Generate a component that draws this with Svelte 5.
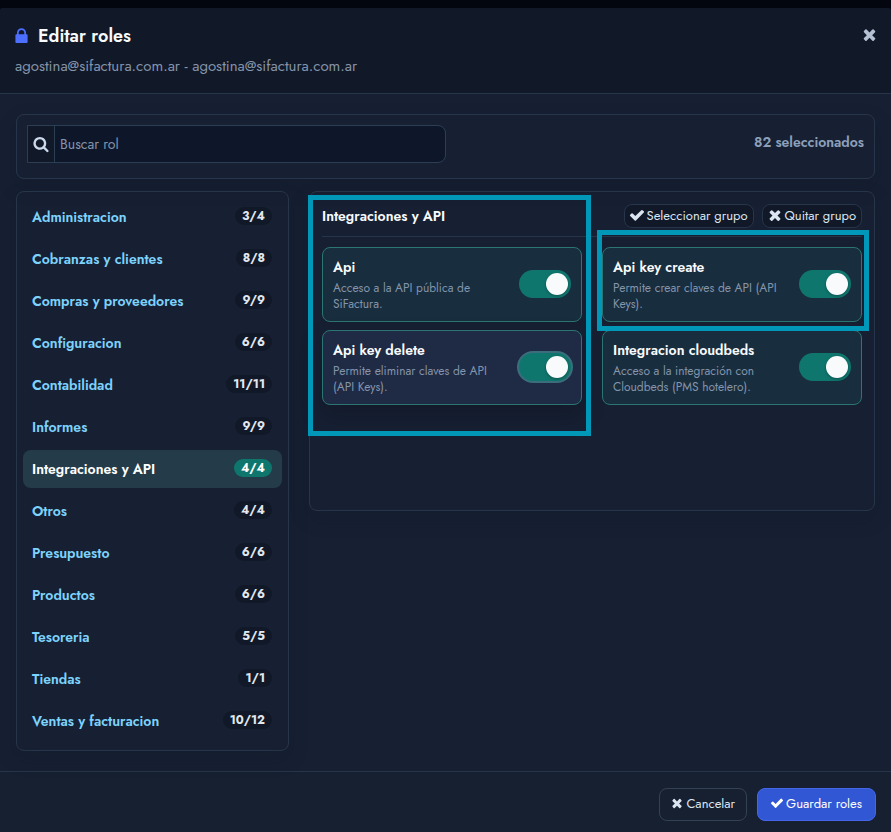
<script lang="ts">
	type Role = {
		name: string;
		description: string;
		enabled: boolean;
		state?: 'active';
		marked?: boolean;
	};

	const groups = [
		{ name: 'Administracion', count: '3/4' },
		{ name: 'Cobranzas y clientes', count: '8/8' },
		{ name: 'Compras y proveedores', count: '9/9' },
		{ name: 'Configuracion', count: '6/6' },
		{ name: 'Contabilidad', count: '11/11' },
		{ name: 'Informes', count: '9/9' },
		{ name: 'Integraciones y API', count: '4/4' },
		{ name: 'Otros', count: '4/4' },
		{ name: 'Presupuesto', count: '6/6' },
		{ name: 'Productos', count: '6/6' },
		{ name: 'Tesoreria', count: '5/5' },
		{ name: 'Tiendas', count: '1/1' },
		{ name: 'Ventas y facturacion', count: '10/12' }
	];

	let selected = $state('Integraciones y API');
	let search = $state('');
	let roles = $state<Role[]>([
		{ name: 'Api', description: 'Acceso a la API pública de SiFactura.', enabled: true },
		{ name: 'Api key create', description: 'Permite crear claves de API (API Keys).', enabled: true, marked: true },
		{ name: 'Api key delete', description: 'Permite eliminar claves de API (API Keys).', enabled: true, state: 'active' },
		{ name: 'Integracion cloudbeds', description: 'Acceso a la integración con Cloudbeds (PMS hotelero).', enabled: true }
	]);

	const icons = {
		lock: 'M608 768h576v-160q0-118-85-203t-203-85-203 85-85 203v160zm912 64v736q0 40-28 68t-68 28h-1056q-40 0-68-28t-28-68v-704q0-40 28-68t68-28h64v-160q0-200 136-328t328-128 328 128 136 328v160h64q40 0 68 28t28 68z',
		times: 'M1490 1322q0 40-28 68l-136 136q-28 28-68 28t-68-28l-294-294-294 294q-28 28-68 28t-68-28l-136-136q-28-28-28-68t28-68l294-294-294-294q-28-28-28-68t28-68l136-136q28-28 68-28t68 28l294 294 294-294q28-28 68-28t68 28l136 136q28 28 28 68t-28 68l-294 294 294 294q28 28 28 68z',
		check: 'M1671 566q0 40-28 68l-724 724-136 136q-28 28-68 28t-68-28l-136-136-362-362q-28-28-28-68t28-68l136-136q28-28 68-28t68 28l294 295 656-657q28-28 68-28t68 28l136 136q28 28 28 68z',
		search: 'M1216 832q0-185-131.5-316.5t-316.5-131.5-316.5 131.5-131.5 316.5 131.5 316.5 316.5 131.5 316.5-131.5 131.5-316.5zm512 832q0 52-38 90t-90 38q-54 0-90-38l-343-342q-179 124-399 124-143 0-273.5-55.5t-225-150-150-225-55.5-273.5 55.5-273.5 150-225 225-150 273.5-55.5 273.5 55.5 225 150 150 225 55.5 273.5q0 220-124 399l343 343q37 37 37 90z'
	};

	function setAll(value: boolean) {
		for (const role of roles) role.enabled = value;
	}
</script>

{#snippet icon(name: keyof typeof icons, size: number)}
	<svg width={size} height={size} viewBox="128 128 1536 1536" fill="currentColor" aria-hidden="true">
		<path d={icons[name]}></path>
	</svg>
{/snippet}

<div class="modal">
	<header class="modal-header">
		<div class="title-row">
			<h1><span class="lock">{@render icon('lock', 15)}</span>Editar roles</h1>
			<button class="close" aria-label="Cerrar">{@render icon('times', 15)}</button>
		</div>
		<p class="user">agostina@sifactura.com.ar - agostina@sifactura.com.ar</p>
	</header>

	<div class="modal-body">
		<div class="toolbar">
			<div class="search">
				<label for="role-search" aria-label="Buscar rol">{@render icon('search', 14)}</label>
				<input id="role-search" type="text" placeholder="Buscar rol" bind:value={search} />
			</div>
			<span class="total">82 seleccionados</span>
		</div>

		<div class="columns">
			<nav class="groups">
				{#each groups as group (group.name)}
					<button class="group" class:selected={selected === group.name} onclick={() => (selected = group.name)}>
						<span>{group.name}</span>
						<span class="badge">{group.count}</span>
					</button>
				{/each}
			</nav>

			<section class="panel">
				<div class="panel-header">
					<h2>Integraciones y API</h2>
					<div class="panel-actions">
						<button class="small-btn" onclick={() => setAll(true)}>{@render icon('check', 14)}Seleccionar grupo</button>
						<button class="small-btn" onclick={() => setAll(false)}>{@render icon('times', 14)}Quitar grupo</button>
					</div>
				</div>
				<div class="roles">
					{#each roles as role (role.name)}
						<label class="role" class:enabled={role.enabled} class:active={role.state === 'active'} class:marked={role.marked}>
							<span class="role-text">
								<span class="role-name">{role.name}</span>
								<span class="role-desc">{role.description}</span>
							</span>
							<input class="switch" type="checkbox" role="switch" bind:checked={role.enabled} />
						</label>
					{/each}
				</div>
			</section>
		</div>
	</div>

	<footer class="modal-footer">
		<button class="btn">{@render icon('times', 12)}Cancelar</button>
		<button class="btn primary">{@render icon('check', 12)}Guardar roles</button>
	</footer>
</div>

<style>
	:global(body) {
		margin: 0;
		background: #03060f;
	}
	.modal {
		margin-top: 8px;
		border-radius: 3px 3px 0 0;
		background: #172033;
		color: #f8fafc;
		font-family: Jost, Lato, sans-serif;
		font-size: 14px;
		line-height: 20px;
	}
	.modal *,
	.modal *::before,
	.modal *::after {
		box-sizing: border-box;
	}
	button,
	input {
		font: inherit;
		color: inherit;
	}
	button {
		cursor: pointer;
	}
	svg {
		display: block;
		flex-shrink: 0;
		overflow: visible;
	}
	.modal-header {
		padding: 16px 15px;
		border-bottom: 1px solid #27354a;
		border-radius: 3px 3px 0 0;
		background: #111827;
	}
	.title-row {
		display: flex;
		align-items: center;
		justify-content: space-between;
	}
	h1,
	h2,
	p {
		margin: 0;
	}
	h1 {
		display: flex;
		align-items: center;
		gap: 9px;
		font-size: 18px;
		line-height: 24px;
		font-weight: 600;
	}
	.lock {
		margin-left: -1px;
		padding-bottom: 2px;
		color: #4c6fff;
	}
	.close {
		padding: 0 0 4px;
		margin-right: -1px;
		border: 0;
		background: none;
		color: #b4c0d4;
	}
	.user {
		margin-top: 8px;
		padding-bottom: 1px;
		color: #8494ab;
		font-size: 15px;
	}
	.modal-body {
		padding: 20px 16px;
	}
	.toolbar {
		display: flex;
		justify-content: space-between;
		align-items: flex-start;
		margin-bottom: 12px;
		padding: 10px 10px 15px;
		border: 1px solid #27354a;
		border-radius: 8px;
		box-shadow: 0 8px 20px rgba(10, 16, 28, 0.18);
	}
	.search {
		display: flex;
		width: 50%;
		height: 38px;
		border: 1px solid #2c3e53;
		border-radius: 0 8px 8px 0;
		background: #0e172a;
	}
	.search label {
		display: flex;
		align-items: center;
		padding: 0 6px;
		border-right: 1px solid #2c3e53;
		background: #111827;
		color: #cbd9ea;
	}
	.search input {
		flex: 1;
		min-width: 0;
		padding: 0 5px;
		border: 0;
		background: none;
		outline: none;
	}
	.search input::placeholder {
		color: #8494ab;
	}
	.total {
		margin-top: 7px;
		color: #8da0bb;
		font-weight: 600;
	}
	.columns {
		display: grid;
		grid-template-columns: 273px 1fr;
		align-items: start;
		gap: 20px;
	}
	.groups {
		display: flex;
		flex-direction: column;
		gap: 4px;
		padding: 6px 6px 10px;
		border: 1px solid #27354a;
		border-radius: 8px;
		box-shadow: 0 8px 20px rgba(10, 16, 28, 0.18);
	}
	.group {
		display: flex;
		align-items: center;
		justify-content: space-between;
		height: 38px;
		padding: 0 10px 0 9px;
		border: 0;
		border-radius: 8px;
		background: none;
		color: #7dd3fc;
		font-weight: 600;
		text-align: left;
	}
	.group.selected {
		background: #243c4a;
		color: #fff;
	}
	.badge {
		margin-bottom: 2px;
		padding: 0 7px;
		border-radius: 9px;
		background: #111827;
		color: #e2e8f0;
		font-size: 12px;
		font-weight: 700;
		line-height: 18px;
	}
	.selected .badge {
		background: #0f766e;
		color: #fff;
	}
	.panel {
		position: relative;
		min-height: 320px;
		padding: 12px;
		border: 1px solid #27354a;
		border-radius: 8px;
		box-shadow: 0 8px 20px rgba(10, 16, 28, 0.18);
	}
	/* highlight around the heading and first column */
	.panel::after {
		content: '';
		position: absolute;
		top: 3px;
		left: -2px;
		width: calc(50% + 1px);
		height: 241px;
		border: 5px solid #0097b8;
		pointer-events: none;
	}
	.panel-header {
		display: flex;
		justify-content: space-between;
		margin-bottom: 10px;
		padding-bottom: 8px;
		border-bottom: 1px solid #27354a;
	}
	h2 {
		font-size: 14px;
		line-height: 24px;
		font-weight: 600;
	}
	.panel-actions {
		display: flex;
		gap: 8px;
	}
	.small-btn {
		display: flex;
		align-items: center;
		gap: 3px;
		height: 24px;
		padding: 0 5px;
		border: 1px solid #27354a;
		border-radius: 8px;
		background: #111827;
		color: #dbe5f1;
		font-size: 13px;
	}
	.small-btn svg,
	.btn svg {
		margin-bottom: 2px;
	}
	.roles {
		display: grid;
		grid-template-columns: 1fr 1fr;
		gap: 8px 20px;
	}
	.role {
		position: relative;
		display: flex;
		align-items: center;
		justify-content: space-between;
		gap: 20px;
		padding: 9px 10px;
		border: 1px solid #334155;
		border-radius: 8px;
	}
	.role.enabled {
		border-color: #2b7672;
		background: #182d3d;
	}
	.role.active {
		background: #1f2a44;
		box-shadow: 0 10px 22px rgba(5, 10, 20, 0.3);
	}
	.role.marked::after {
		content: '';
		position: absolute;
		inset: -18px -8px -10px -6px;
		z-index: 1;
		border: 5px solid #0097b8;
		pointer-events: none;
	}
	.role-name {
		display: block;
		margin-bottom: 3px;
		font-weight: 600;
	}
	.role-desc {
		display: block;
		color: #8494ab;
		font-size: 12px;
		line-height: 16px;
	}
	.switch {
		appearance: none;
		flex-shrink: 0;
		width: 52px;
		height: 28px;
		margin: 0 0 1px;
		padding: 3px;
		border-radius: 14px;
		background: #475569;
	}
	.switch::before {
		content: '';
		display: block;
		width: 22px;
		height: 22px;
		border-radius: 50%;
		background: #f8fafc;
		box-shadow: 0 1px 3px rgba(0, 0, 0, 0.3);
	}
	.switch:checked {
		background: #0f766e;
	}
	.switch:checked::before {
		margin-left: auto;
	}
	.active .switch {
		box-shadow: 0 0 0 2px #3b6d7c;
	}
	.modal-footer {
		display: flex;
		justify-content: flex-end;
		gap: 10px;
		padding: 16px 15px 11px;
		border-top: 1px solid #27354a;
		background: #162031;
	}
	.btn {
		display: flex;
		align-items: center;
		gap: 3px;
		height: 33px;
		padding: 0 11px 2px;
		border: 1px solid #334155;
		border-radius: 8px;
		background: #162031;
		color: #dbe5f1;
		font-size: 13px;
	}
	.btn.primary {
		padding: 0 13px 2px;
		border-color: #4467e8;
		background: #3157d5;
		color: #fff;
	}
</style>
